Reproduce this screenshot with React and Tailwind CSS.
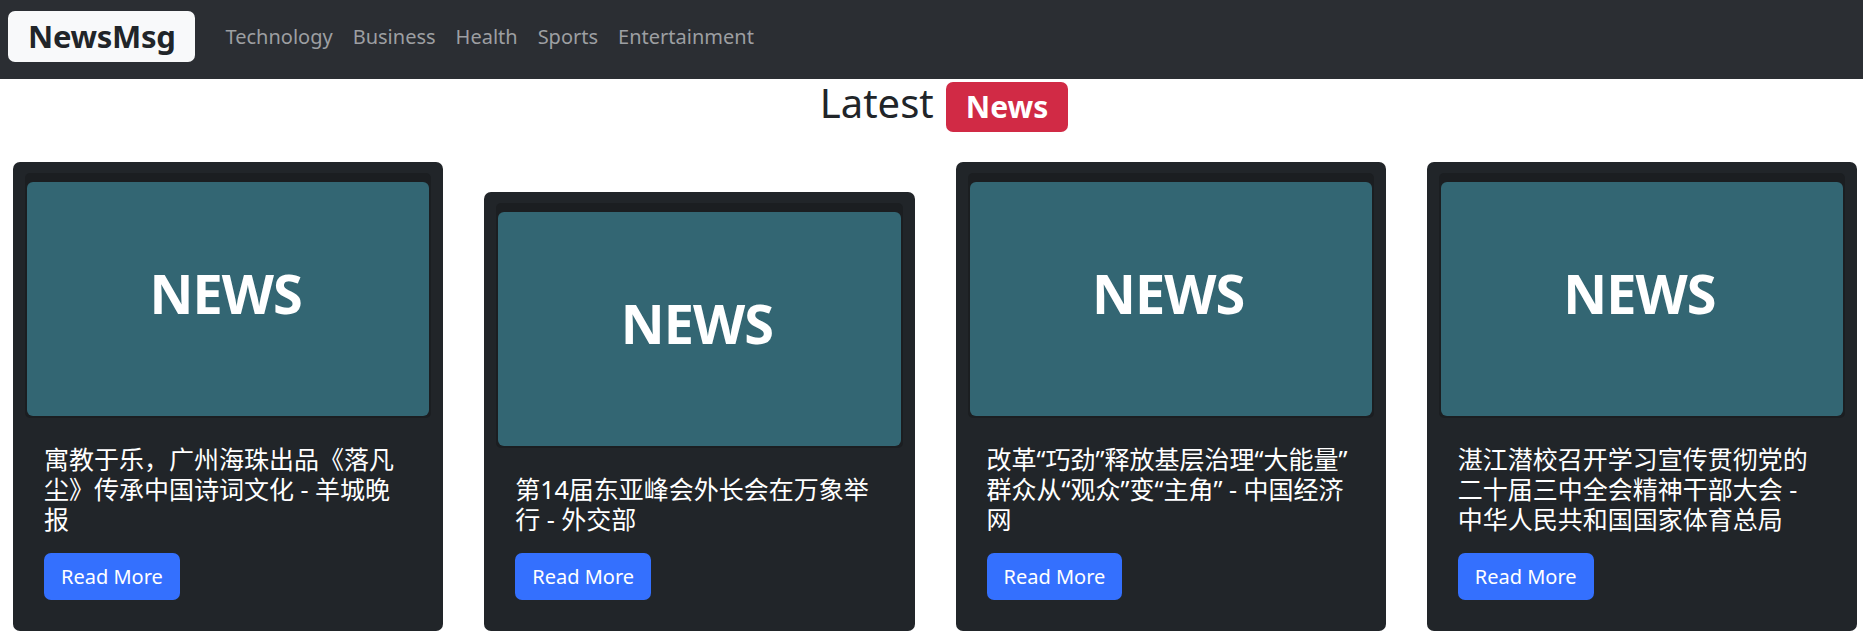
import React from 'react';

const links = ['Technology', 'Business', 'Health', 'Sports', 'Entertainment'];

const articles = [
  { id: 1, title: '寓教于乐，广州海珠出品《落凡\n尘》传承中国诗词文化 - 羊城晚\n报' },
  { id: 2, title: '第14届东亚峰会外长会在万象举\n行 - 外交部' },
  { id: 3, title: '改革“巧劲”释放基层治理“大能量”\n群众从“观众”变“主角” - 中国经济\n网' },
  { id: 4, title: '湛江潜校召开学习宣传贯彻党的\n二十届三中全会精神干部大会 -\n中华人民共和国国家体育总局' },
];

function NewsThumb() {
  return (
    <div className="h-[245px] rounded-[5px] bg-[#1b1e21] pt-[9px] px-[2px] pb-[2px]">
      <div className="h-full rounded-[6px] bg-[#336673] flex items-center justify-center pb-[12px] pr-[5px]">
        <span className="font-['Open_Sans',sans-serif] font-bold text-[54px] leading-none text-white tracking-[-1px] blur-[0.5px]">
          NEWS
        </span>
      </div>
    </div>
  );
}

export default function App() {
  return (
    <div className="min-h-screen bg-white font-['Noto_Sans','Noto_Sans_CJK_SC',sans-serif] text-[#212529]">
      {/* Navbar */}
      <nav className="flex items-center h-[79px] pb-[6px] pl-[8px] bg-[#2b2e33]">
        <a className="h-[51px] px-[20px] mr-[20px] rounded-[7px] bg-[#f8f9fa] text-[31px] tracking-[-0.3px] font-bold leading-[51px] text-[#212529]">
          NewsMsg
        </a>
        {links.map((l) => (
          <a key={l} className="px-[10px] text-[20px] leading-[30px] text-[#9d9fa2]">
            {l}
          </a>
        ))}
      </nav>

      {/* Heading */}
      <div className="h-[83px] pl-[25px] flex justify-center items-baseline">
        <h2 className="text-[40px] leading-[48px] font-normal mr-[12px]">Latest</h2>
        <span className="rounded-[7px] bg-[#d12a45] px-[20px] py-[10px] text-[30px] leading-[30px] font-bold text-white">
          News
        </span>
      </div>

      {/* Cards */}
      <div className="grid grid-cols-4 items-end gap-[41px] pl-[13px] pr-[6px]">
        {articles.map((a) => (
          <div key={a.id} className="rounded-[7px] bg-[#212529] px-[12px] pt-[11px]">
            <NewsThumb />
            <div className="px-[19px] pt-[26px] pb-[31px]">
              <h5 className="mb-[19px] whitespace-pre-line text-[25px] leading-[30px] font-normal text-white">
                {a.title}
              </h5>
              <button className="rounded-[7px] bg-[#3470fe] px-[17px] py-[8.5px] text-[20px] leading-[30px] text-white">
                Read More
              </button>
            </div>
          </div>
        ))}
      </div>
    </div>
  );
}
